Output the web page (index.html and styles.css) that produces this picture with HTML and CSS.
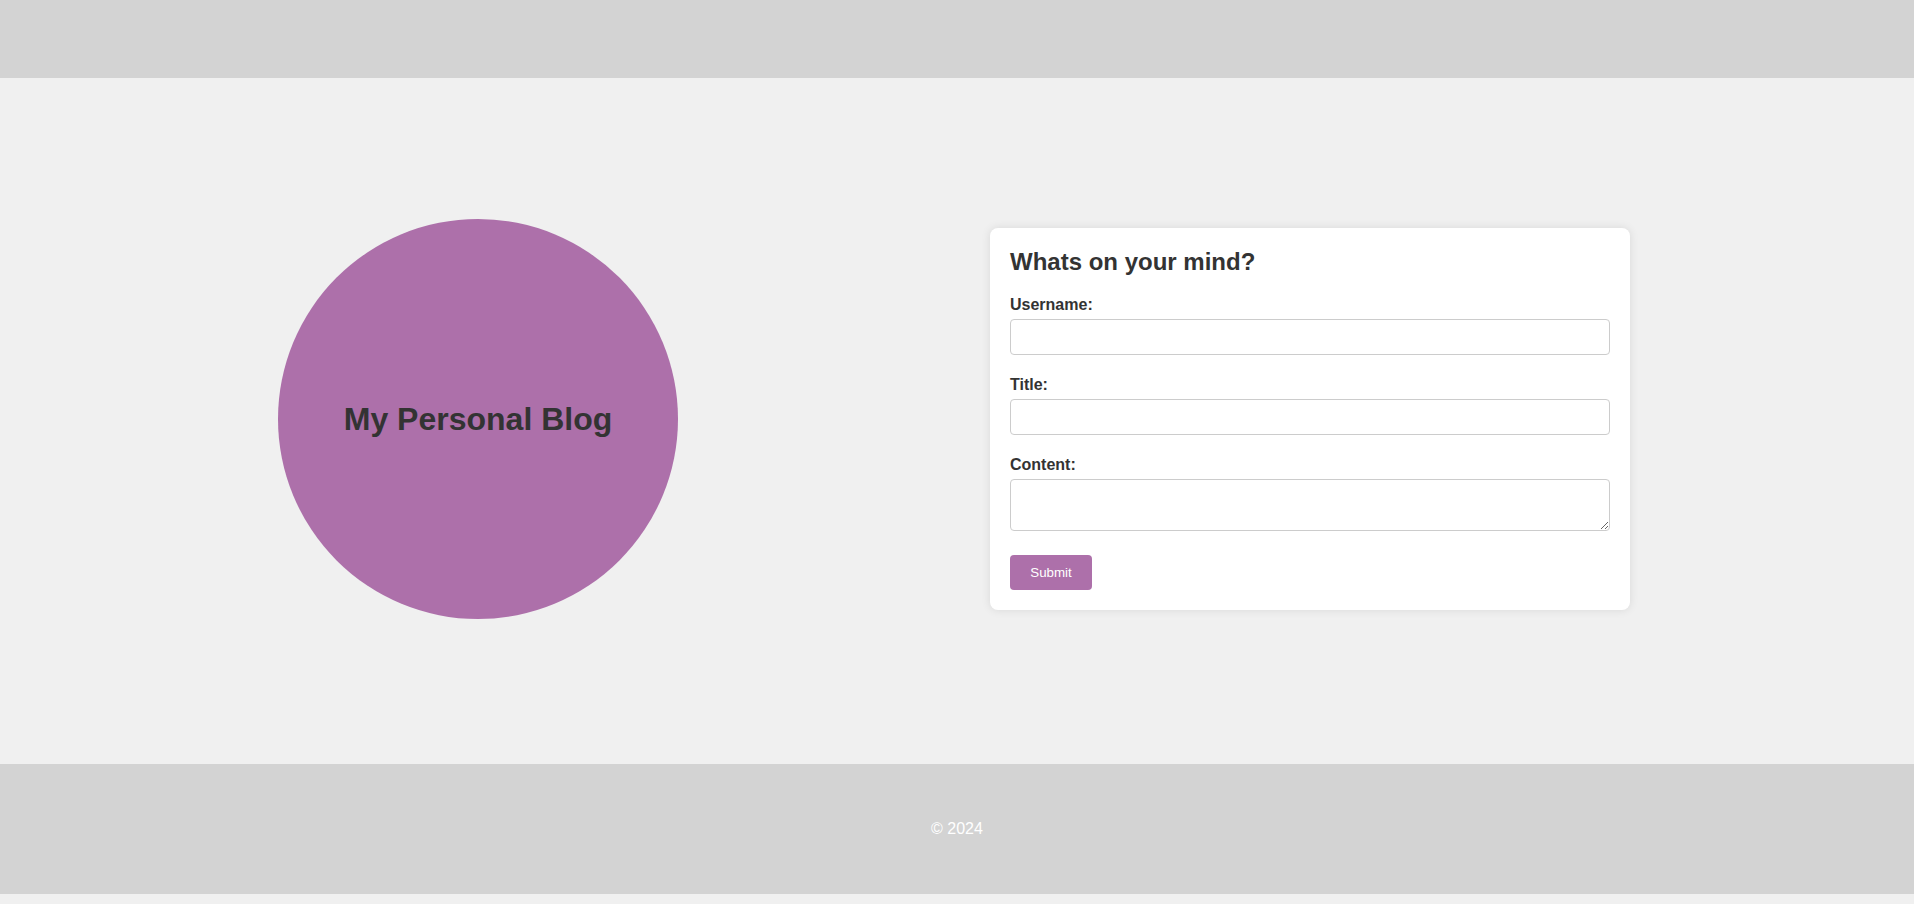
FILE: index.html
```html
<!DOCTYPE html>
<html lang="en">
<head>
<meta charset="utf-8">
<title>My Personal Blog</title>
<link rel="stylesheet" href="styles.css">
</head>
<body>
<header class="site-header"></header>
<main class="main">
  <div class="logo-circle">
    <h1 class="logo-title">My Personal Blog</h1>
  </div>
  <section class="card">
    <h2 class="card-title">Whats on your mind?</h2>
    <form class="post-form">
      <label class="field-label" for="username">Username:</label>
      <input class="field-input" type="text" id="username">
      <label class="field-label" for="title">Title:</label>
      <input class="field-input" type="text" id="title">
      <label class="field-label" for="content">Content:</label>
      <textarea class="field-textarea" id="content"></textarea>
      <button class="submit-btn" type="button">Submit</button>
    </form>
  </section>
</main>
<footer class="site-footer">© 2024</footer>
</body>
</html>
```
FILE: styles.css
```css
* {
  box-sizing: border-box;
}

html, body {
  margin: 0;
  padding: 0;
}

body {
  background: #f0f0f0;
  font-family: "Liberation Sans", Arial, sans-serif;
  color: #333;
  height: 904px;
}

.site-header {
  height: 78px;
  background: #d3d3d3;
}

.main {
  height: 686px;
  display: flex;
  align-items: center;
  padding: 0 0 4px 278px;
  gap: 312px;
  background: #f0f0f0;
}

.logo-circle {
  width: 400px;
  height: 400px;
  border-radius: 50%;
  background: #ad70aa;
  display: flex;
  align-items: center;
  justify-content: center;
  flex-shrink: 0;
}

.logo-title {
  margin: 0;
  font-size: 32px;
  font-weight: bold;
  color: #333;
}

.card {
  width: 640px;
  background: #fff;
  border-radius: 8px;
  padding: 20px;
  box-shadow: 0 0 10px rgba(0, 0, 0, 0.1);
  flex-shrink: 0;
}

.card-title {
  margin: 0 0 19px;
  font-size: 24px;
  line-height: 28px;
  font-weight: bold;
  color: #333;
}

.post-form {
  display: flex;
  flex-direction: column;
  align-items: stretch;
}

.field-label {
  display: block;
  font-size: 16px;
  line-height: 19px;
  font-weight: bold;
  color: #333;
  margin-bottom: 5px;
}

.field-input,
.field-textarea {
  display: block;
  width: 100%;
  border: 1px solid #ccc;
  border-radius: 4px;
  background: #fff;
  font-family: "Liberation Sans", Arial, sans-serif;
  font-size: 14px;
  padding: 8px;
  margin: 0 0 20px;
}

.field-input {
  height: 36px;
}

.field-textarea {
  height: 52px;
  margin-bottom: 24px;
  resize: both;
}

.submit-btn {
  align-self: flex-start;
  background: #ad70aa;
  color: #fff;
  border: none;
  border-radius: 4px;
  padding: 10px 20px;
  width: 82px;
  height: 35px;
  font-family: "Liberation Sans", Arial, sans-serif;
  font-size: 13.333px;
  cursor: pointer;
}

.site-footer {
  height: 130px;
  background: #d3d3d3;
  color: #fff;
  text-align: center;
  font-size: 16px;
  line-height: 18px;
  padding-top: 56px;
}
```
